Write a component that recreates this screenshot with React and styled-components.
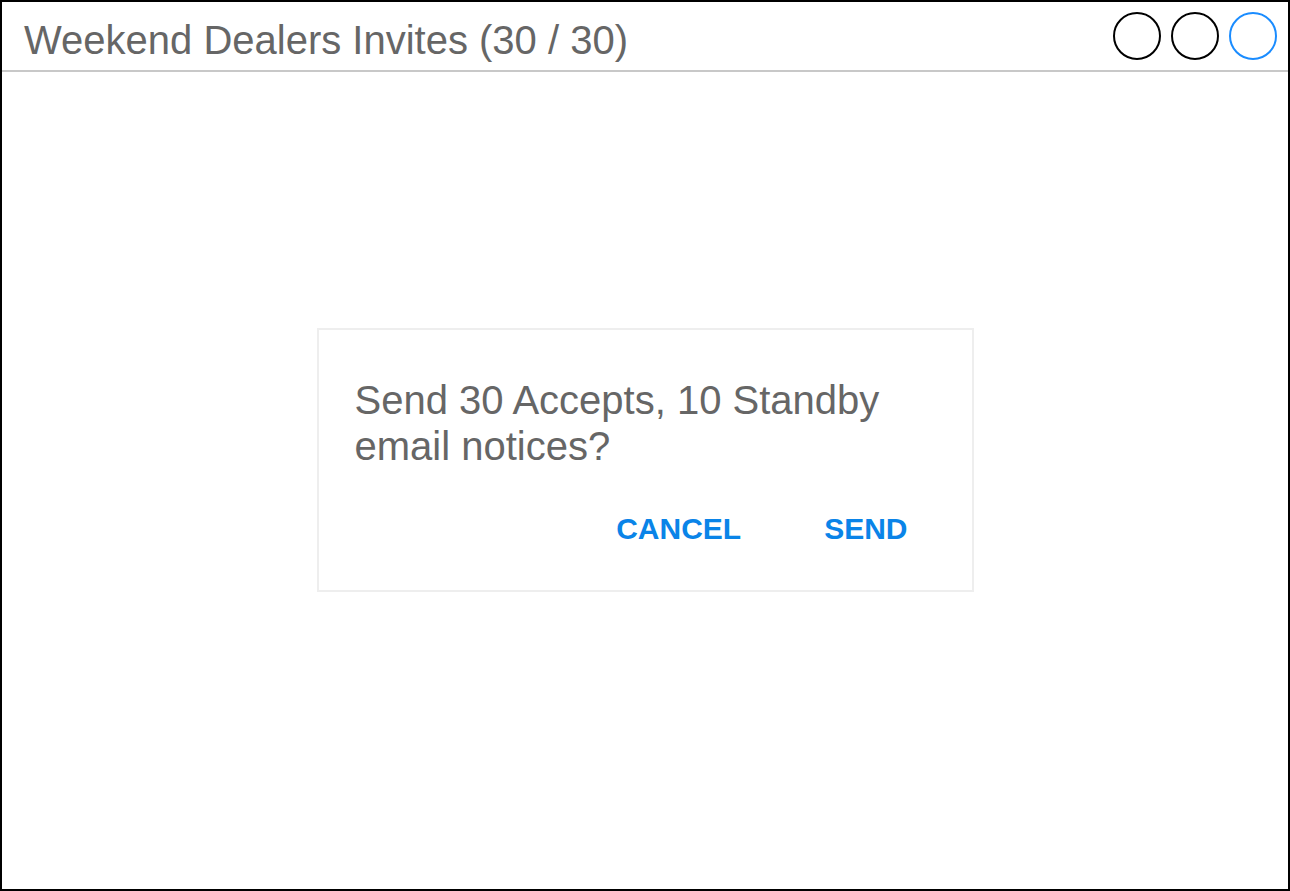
import React from 'react';
import styled, { createGlobalStyle } from 'styled-components';

const GlobalStyle = createGlobalStyle`
  html, body {
    margin: 0;
    padding: 0;
    background: #fff;
  }
  body {
    font-family: "Liberation Sans", Arial, sans-serif;
  }
`;

const Frame = styled.div`
  box-sizing: border-box;
  width: 1290px;
  height: 891px;
  border: 2px solid #000;
  display: flex;
  flex-direction: column;
  background: #fff;
`;

const Header = styled.div`
  height: 68px;
  display: flex;
  align-items: center;
  justify-content: space-between;
  padding: 0 11px 0 22px;
  border-bottom: 2px solid #c8c8c8;
`;

const Title = styled.h1`
  margin: 0;
  font-size: 40px;
  font-weight: normal;
  color: #666;
  padding-top: 8px;
`;

const Controls = styled.div`
  display: flex;
  gap: 10px;
`;

const Circle = styled.div`
  width: 48px;
  height: 48px;
  box-sizing: border-box;
  border-radius: 50%;
  border: 2px solid ${p => (p.$active ? '#1a8cff' : '#000')};
`;

const Body = styled.div`
  flex: 1;
  display: flex;
  align-items: center;
  justify-content: center;
  padding-bottom: 42px;
`;

const Dialog = styled.div`
  box-sizing: border-box;
  width: 657px;
  height: 264px;
  border: 2px solid #eeeeee;
  padding: 47px 36px 0 36px;
  display: flex;
  flex-direction: column;
`;

const Message = styled.p`
  margin: 0;
  font-size: 40px;
  line-height: 46px;
  color: #666;
`;

const Actions = styled.div`
  display: flex;
  justify-content: flex-end;
  gap: 83px;
  margin-top: 43px;
  padding-right: 28px;
`;

const ActionButton = styled.button`
  border: none;
  background: none;
  padding: 0;
  font-family: "Liberation Sans", Arial, sans-serif;
  font-weight: bold;
  font-size: 30px;
  color: #0a84e8;
  cursor: pointer;
`;

export default function App() {
  return (
    <>
      <GlobalStyle />
      <Frame>
        <Header>
          <Title>Weekend Dealers Invites (30 / 30)</Title>
          <Controls>
            <Circle />
            <Circle />
            <Circle $active />
          </Controls>
        </Header>
        <Body>
          <Dialog>
            <Message>
              Send 30 Accepts, 10 Standby
              <br />
              email notices?
            </Message>
            <Actions>
              <ActionButton>CANCEL</ActionButton>
              <ActionButton>SEND</ActionButton>
            </Actions>
          </Dialog>
        </Body>
      </Frame>
    </>
  );
}
